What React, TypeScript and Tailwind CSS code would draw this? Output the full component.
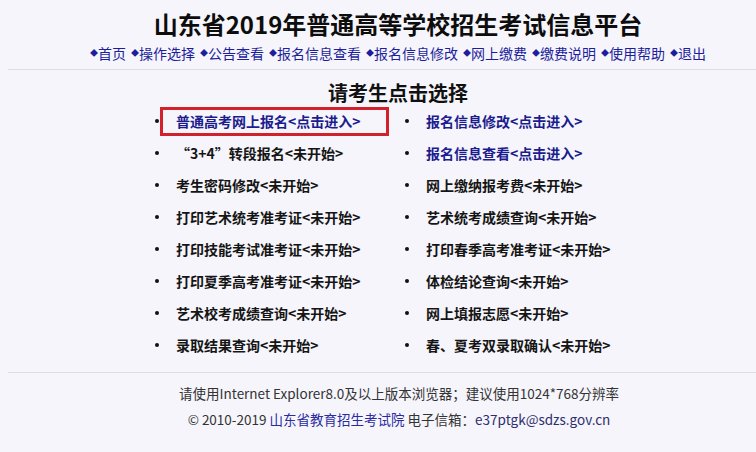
import React from 'react';

const navItems = ['首页', '操作选择', '公告查看', '报名信息查看', '报名信息修改', '网上缴费', '缴费说明', '使用帮助', '退出'];

type Item = { label: string; status: string; open?: boolean };

const rows: [Item, Item][] = [
  [{ label: '普通高考网上报名', status: '点击进入', open: true }, { label: '报名信息修改', status: '点击进入', open: true }],
  [{ label: '“3+4”转段报名', status: '未开始' }, { label: '报名信息查看', status: '点击进入', open: true }],
  [{ label: '考生密码修改', status: '未开始' }, { label: '网上缴纳报考费', status: '未开始' }],
  [{ label: '打印艺术统考准考证', status: '未开始' }, { label: '艺术统考成绩查询', status: '未开始' }],
  [{ label: '打印技能考试准考证', status: '未开始' }, { label: '打印春季高考准考证', status: '未开始' }],
  [{ label: '打印夏季高考准考证', status: '未开始' }, { label: '体检结论查询', status: '未开始' }],
  [{ label: '艺术校考成绩查询', status: '未开始' }, { label: '网上填报志愿', status: '未开始' }],
  [{ label: '录取结果查询', status: '未开始' }, { label: '春、夏考双录取确认', status: '未开始' }],
];

function Entry({ item, boxed }: { item: Item; boxed?: boolean }) {
  return (
    <div className="relative flex h-8 items-center">
      <span className="mr-[17px] h-[4px] w-[4px] shrink-0 rounded-full bg-[#111]" />
      <span className={`text-[14px] font-bold ${item.open ? 'text-[#1c1c8e]' : 'text-[#151515]'}`}>
        {item.label}&lt;{item.status}&gt;
      </span>
      {boxed && (
        <div className="absolute left-[5px] top-[2px] h-[29px] w-[229px] border-[3px] border-[#d2212b]" />
      )}
    </div>
  );
}

export default function App() {
  return (
    <div
      className="h-[452px] w-[756px] overflow-hidden bg-[#f5f5fb] text-[#222]"
      style={{ fontFamily: '"Microsoft YaHei", "Noto Sans CJK SC", "Noto Sans", sans-serif' }}
    >
      {/* Header */}
      <div className="pl-[40px] pt-[7px] text-center">
        <h1 className="text-[24px] font-bold leading-[34px] text-[#0d0d0d]">
          山东省2019年普通高等学校招生考试信息平台
        </h1>
        <div className="mt-[2px] flex justify-center gap-[5px] text-[14px] leading-[20px] text-[#1e1e9c]">
          {navItems.map((n) => (
            <span key={n} className="flex items-center">
              <span className="text-[8px]">◆</span>
              {n}
            </span>
          ))}
        </div>
      </div>
      <div className="ml-[8px] mt-[6px] h-px bg-[#dcdcea]" />

      {/* Choices */}
      <h2 className="mt-[11px] pl-[40px] text-center text-[20px] font-bold leading-[24px] text-[#111]">
        请考生点击选择
      </h2>
      <div className="grid grid-cols-[250px_250px] pl-[155px]">
        {rows.map(([a, b], i) => (
          <React.Fragment key={i}>
            <Entry item={a} boxed={i === 0} />
            <Entry item={b} />
          </React.Fragment>
        ))}
      </div>

      {/* Footer */}
      <div className="ml-[8px] mt-[11px] h-px bg-[#dcdcea]" />
      <div className="mt-[10px] pl-[42px] text-center text-[13.5px] leading-[20px] text-[#333]">
        <p>请使用Internet Explorer8.0及以上版本浏览器；建议使用1024*768分辨率</p>
        <p className="mt-[6px]">
          © 2010-2019 <span className="text-[#2b2ba0]">山东省教育招生考试院</span> 电子信箱：
          <span className="text-[#2e2e6e]">e37ptgk@sdzs.gov.cn</span>
        </p>
      </div>
    </div>
  );
}
